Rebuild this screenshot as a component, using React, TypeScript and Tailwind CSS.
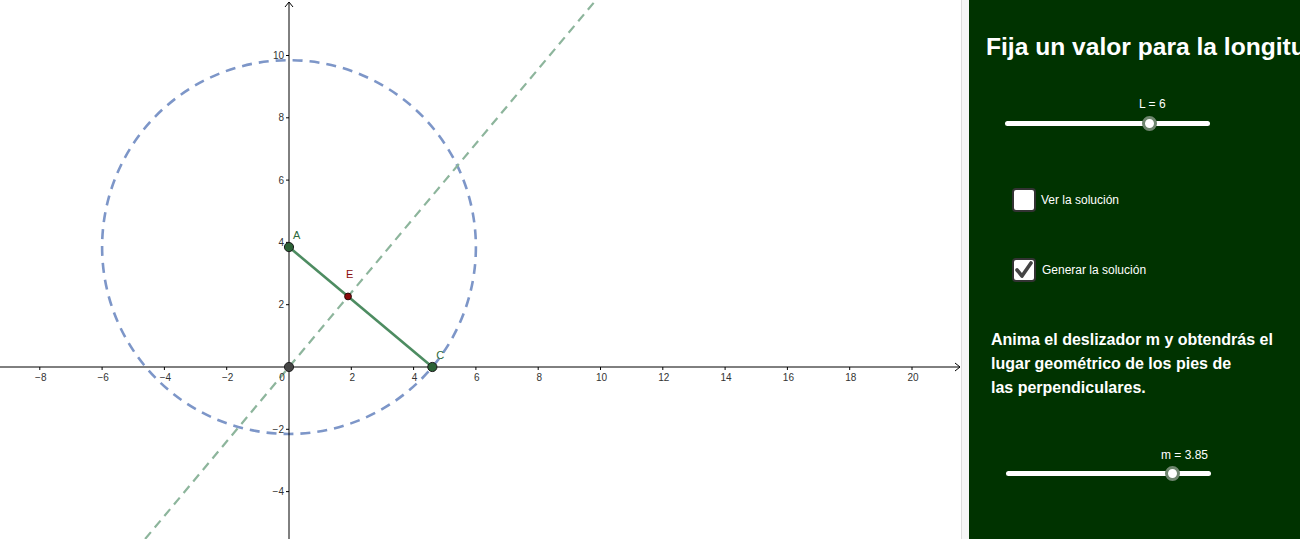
import React from "react";

const S = 31.15;
const OX = 289;
const OY = 367;
const px = (x: number) => OX + x * S;
const py = (y: number) => OY - y * S;

function Graph() {
  const xs = [-8, -6, -4, -2, 2, 4, 6, 8, 10, 12, 14, 16, 18, 20];
  const ys = [-4, -2, 2, 4, 6, 8, 10];
  const fmt = (n: number) => (n < 0 ? "\u2212" + Math.abs(n) : String(n));
  const A = { x: 0, y: 3.85 };
  const C = { x: Math.sqrt(36 - 3.85 * 3.85), y: 0 };
  const t = (3.85 * 3.85) / 36;
  const E = { x: C.x * t, y: 3.85 * (1 - t) };
  const k = E.y / E.x;
  const yBottom = 539;
  const xBottom = OX - (yBottom - OY) / k;
  const xTop = OX + OY / k;
  return (
    <svg width="961" height="539" viewBox="0 0 961 539" className="block">
      {/* dashed circle */}
      <circle
        cx={px(0)}
        cy={py(3.85)}
        r={6 * S}
        fill="none"
        stroke="#7d96c8"
        strokeWidth="2.6"
        strokeDasharray="10 7"
      />
      {/* dashed line */}
      <line
        x1={xBottom}
        y1={yBottom}
        x2={xTop}
        y2={0}
        stroke="#8db59c"
        strokeWidth="2.2"
        strokeDasharray="9 6"
      />
      {/* axes */}
      <line x1="0" y1={OY} x2="960" y2={OY} stroke="#000" strokeWidth="1" />
      <polyline points={`955,${OY - 4} 960,${OY} 955,${OY + 4}`} fill="none" stroke="#000" strokeWidth="1" />
      <line x1={OX} y1="2" x2={OX} y2="539" stroke="#000" strokeWidth="1" />
      <polyline points={`${OX - 4},7 ${OX},2 ${OX + 4},7`} fill="none" stroke="#000" strokeWidth="1" />
      {xs.map((v) => (
        <g key={"x" + v}>
          <line x1={px(v)} y1={OY} x2={px(v)} y2={OY + 3} stroke="#000" strokeWidth="1" />
          <text
            x={px(v) + 1}
            y={OY + 14}
            textAnchor="middle"
            fontSize="10"
            fill="#333"
            fontFamily="'Liberation Sans', Arial, sans-serif"
          >
            {fmt(v)}
          </text>
        </g>
      ))}
      {ys.map((v) => (
        <g key={"y" + v}>
          <line x1={OX - 3} y1={py(v)} x2={OX} y2={py(v)} stroke="#000" strokeWidth="1" />
          <text
            x={OX - 5}
            y={py(v) + 3.5}
            textAnchor="end"
            fontSize="10"
            fill="#333"
            fontFamily="'Liberation Sans', Arial, sans-serif"
          >
            {fmt(v)}
          </text>
        </g>
      ))}
      <text x={OX - 7} y={OY + 14} textAnchor="middle" fontSize="10" fill="#333" fontFamily="'Liberation Sans', Arial, sans-serif">
        0
      </text>
      {/* segment */}
      <line x1={px(A.x)} y1={py(A.y)} x2={px(C.x)} y2={py(C.y)} stroke="#4d8c61" strokeWidth="2.6" />
      {/* points */}
      <circle cx={px(0)} cy={py(0)} r="4.6" fill="#444" stroke="#222" strokeWidth="1" />
      <circle cx={px(A.x)} cy={py(A.y)} r="4.6" fill="#2b6236" stroke="#1a1a1a" strokeWidth="1" />
      <circle cx={px(C.x)} cy={py(C.y)} r="4.6" fill="#2b6236" stroke="#1a1a1a" strokeWidth="1" />
      <circle cx={px(E.x)} cy={py(E.y)} r="3.4" fill="#8a0c0c" stroke="#2a0a0a" strokeWidth="1" />
      {/* labels */}
      <text x={px(A.x) + 4} y={py(A.y) - 8} fontSize="11" fill="#2e6a3c" fontFamily="'Liberation Sans', Arial, sans-serif">
        A
      </text>
      <text x={px(E.x) - 2} y={py(E.y) - 18} fontSize="11" fill="#8a0c0c" fontFamily="'Liberation Sans', Arial, sans-serif">
        E
      </text>
      <text x={px(C.x) + 4} y={py(C.y) - 8} fontSize="11" fill="#2e6a3c" fontFamily="'Liberation Sans', Arial, sans-serif">
        C
      </text>
    </svg>
  );
}

function Slider({ frac }: { frac: number }) {
  return (
    <div className="relative h-[15px] w-[205px]">
      <div className="absolute left-0 right-0 top-[5px] h-[5px] rounded-full bg-white" />
      <div
        className="absolute top-0 h-[15px] w-[15px] rounded-full border-[3px] border-[#6f866f] bg-white"
        style={{ left: `calc(${frac * 100}% - 7.5px)` }}
      />
    </div>
  );
}

function CheckBox({ checked }: { checked: boolean }) {
  return (
    <div className="flex h-[24px] w-[24px] items-center justify-center rounded-[4px] border-2 border-[#333] bg-white">
      {checked && (
        <svg width="20" height="20" viewBox="0 0 20 20">
          <polyline points="3,10 8,16 17,3" fill="none" stroke="#444" strokeWidth="3.6" strokeLinecap="round" strokeLinejoin="round" />
        </svg>
      )}
    </div>
  );
}

export default function App() {
  return (
    <div
      className="flex h-[539px] w-[1300px] overflow-hidden bg-white"
      style={{ fontFamily: "'Liberation Sans', Arial, sans-serif" }}
    >
      <div className="w-[961px] shrink-0 bg-white">
        <Graph />
      </div>
      <div className="w-px shrink-0 bg-[#dcdcdc]" />
      <div className="w-[7px] shrink-0 bg-[#f6f6f6]" />
      <div className="flex w-[331px] shrink-0 flex-col overflow-hidden bg-[#003300] text-white">
        <div className="mt-[33px] whitespace-nowrap pl-[17px] text-[24.6px] font-bold leading-[28px]">
          Fija un valor para la longitud del segmento
        </div>
        <div className="ml-[170px] mt-[36px] text-[12px] leading-[14px]">L = 6</div>
        <div className="ml-[36px] mt-[5px]">
          <Slider frac={0.707} />
        </div>
        <div className="ml-[43px] mt-[57px] flex items-center gap-[5px]">
          <CheckBox checked={false} />
          <span className="text-[12px] leading-[14px]">Ver la solución</span>
        </div>
        <div className="ml-[43px] mt-[46px] flex items-center gap-[6px]">
          <CheckBox checked={true} />
          <span className="text-[12px] leading-[14px]">Generar la solución</span>
        </div>
        <div className="ml-[22px] mt-[46px] text-[16px] font-bold leading-[24px]">
          Anima el deslizador m y obtendrás el
          <br />
          lugar geométrico de los pies de
          <br />
          las perpendiculares.
        </div>
        <div className="ml-[192px] mt-[48px] text-[12px] leading-[14px]">m = 3.85</div>
        <div className="ml-[37px] mt-[4px]">
          <Slider frac={0.81} />
        </div>
      </div>
    </div>
  );
}
